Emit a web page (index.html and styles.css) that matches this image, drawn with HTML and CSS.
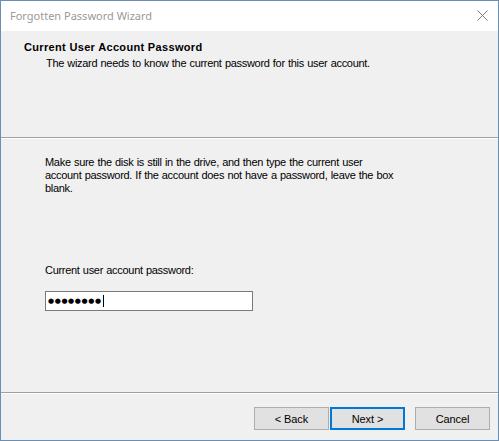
FILE: index.html
```html
<!DOCTYPE html>
<html>
<head>
<meta charset="utf-8">
<link rel="stylesheet" href="styles.css">
</head>
<body>
<div class="window">
  <div class="titlebar">
    <span class="title">Forgotten Password Wizard</span>
    <svg class="close" width="11" height="11" viewBox="0 0 11 11"><path d="M0.5 0.5 L10.5 10.5 M10.5 0.5 L0.5 10.5" stroke="#7a7a7a" stroke-width="1" fill="none"/></svg>
  </div>
  <div class="header">
    <div class="h-title">Current User Account Password</div>
    <div class="h-sub">The wizard needs to know the current password for this user account.</div>
  </div>
  <div class="sep"></div>
  <div class="content">
    <p class="desc">Make sure the disk is still in the drive, and then type the current user<br>account password. If the account does not have a password, leave the box<br>blank.</p>
    <div class="label">Current user account password:</div>
    <div class="input"><span class="dots">●●●●●●●●</span><span class="caret"></span></div>
  </div>
  <div class="sep"></div>
  <div class="footer">
    <button class="btn">&lt; Back</button>
    <button class="btn default">Next &gt;</button>
    <button class="btn cancel">Cancel</button>
  </div>
</div>
</body>
</html>
```
FILE: styles.css
```css
html, body {
  margin: 0;
  padding: 0;
  background: #f0f0f0;
}
.window {
  width: 499px;
  height: 441px;
  box-sizing: border-box;
  border: 1px solid #6b8fb3;
  background: #f0f0f0;
  display: flex;
  flex-direction: column;
  font-family: "Liberation Sans", Arial, sans-serif;
  font-size: 11px;
  letter-spacing: -0.3px;
  word-spacing: 0.5px;
  color: #000;
}
.titlebar {
  height: 30px;
  flex: none;
  background: #fff;
  display: flex;
  align-items: center;
  justify-content: space-between;
  padding: 0 10px 0 9px;
}
.title {
  font-family: "Noto Sans", "Open Sans", sans-serif;
  font-size: 11px;
  letter-spacing: 0;
  word-spacing: 0;
  color: #999;
  position: relative;
  top: -1px;
}
.close {
  display: block;
  position: relative;
  top: -1px;
}
.header {
  height: 106px;
  flex: none;
  box-sizing: border-box;
  padding: 10px 0 0 23px;
  line-height: 13px;
}
.h-title {
  font-weight: bold;
  letter-spacing: 0.33px;
  word-spacing: 0;
}
.h-sub {
  margin-top: 3px;
  padding-left: 22px;
}
.sep {
  flex: none;
  height: 1px;
  border-top: 1px solid #a0a0a0;
  background: #fff;
}
.content {
  flex: 1;
  padding: 17px 0 0 44px;
  line-height: 13px;
}
.desc {
  margin: 0;
}
.label {
  margin-top: 69px;
}
.input {
  margin-top: 14px;
  width: 208px;
  height: 20px;
  box-sizing: border-box;
  border: 1px solid #7a7a7a;
  background: #fff;
  display: flex;
  align-items: center;
  padding-left: 2px;
}
.dots {
  font-family: "DejaVu Sans", sans-serif;
  font-size: 7px;
  letter-spacing: 0.6px;
  word-spacing: 0;
  line-height: 1;
}
.caret {
  width: 1px;
  height: 12px;
  background: #000;
  margin-left: 1px;
}
.footer {
  height: 46px;
  flex: none;
  display: flex;
  align-items: flex-start;
  padding: 13px 0 0 253px;
  box-sizing: border-box;
}
.btn {
  width: 75px;
  height: 23px;
  box-sizing: border-box;
  border: 1px solid #adadad;
  background: #e1e1e1;
  font-family: "Liberation Sans", Arial, sans-serif;
  font-size: 11px;
  letter-spacing: -0.1px;
  color: #000;
  padding: 0;
  margin: 0 1px 0 0;
}
.btn.default {
  border: 2px solid #0078d7;
}
.btn.cancel {
  margin-left: 9px;
}
```
